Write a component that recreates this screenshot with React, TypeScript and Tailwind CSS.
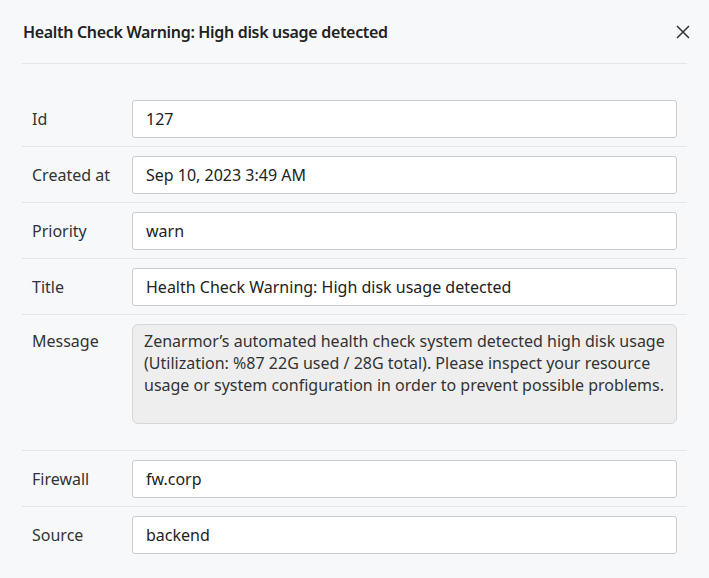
import React from "react";

const Row = ({ label, value, last }: { label: string; value: string; last?: boolean }) => (
  <div className={`flex items-center h-[56px] pl-[10px] ${last ? "" : "border-b border-[#e3e5e8]"}`}>
    <div className="w-[100px] text-[16px] text-[#333]">{label}</div>
    <div className="flex-1 mr-[10px] h-[38px] bg-white border border-[#ccc] rounded-[3px] flex items-center px-[13px] text-[16px] text-[#222]">
      {value}
    </div>
  </div>
);

export default function App() {
  return (
    <div className="w-[709px] h-[578px] bg-[#f7f8fa] font-['Inter',sans-serif]">
      <div className="mx-[22px] flex items-center justify-between h-[64px] pl-[1px] border-b border-[#e3e5e8]">
        <div className="text-[16px] font-semibold text-[#222] tracking-[-0.02em]">Health Check Warning: High disk usage detected</div>
        <svg width="14" height="14" viewBox="0 0 14 14" stroke="#333" strokeWidth="1.5" className="mr-[-3px]">
          <path d="M1 1L13 13M13 1L1 13" />
        </svg>
      </div>
      <div className="mx-[22px] mt-[27px]">
        <Row label="Id" value="127" />
        <Row label="Created at" value="Sep 10, 2023 3:49 AM" />
        <Row label="Priority" value="warn" />
        <Row label="Title" value="Health Check Warning: High disk usage detected" />
        <div className="flex items-start border-b border-[#e3e5e8] h-[136px] pl-[10px] pt-[9px]">
          <div className="w-[100px] text-[16px] text-[#333] pt-[5px]">Message</div>
          <div className="flex-1 mr-[10px] h-[100px] bg-[#eeeeee] border border-[#d6d6d6] rounded-[6px] px-[11px] pt-[5px] text-[16px] leading-[22px] text-[#333]">
            Zenarmor’s automated health check system detected high disk usage (Utilization: %87 22G used / 28G total). Please inspect your resource usage or system configuration in order to prevent possible problems.
          </div>
        </div>
        <Row label="Firewall" value="fw.corp" />
        <Row label="Source" value="backend" last />
      </div>
    </div>
  );
}
